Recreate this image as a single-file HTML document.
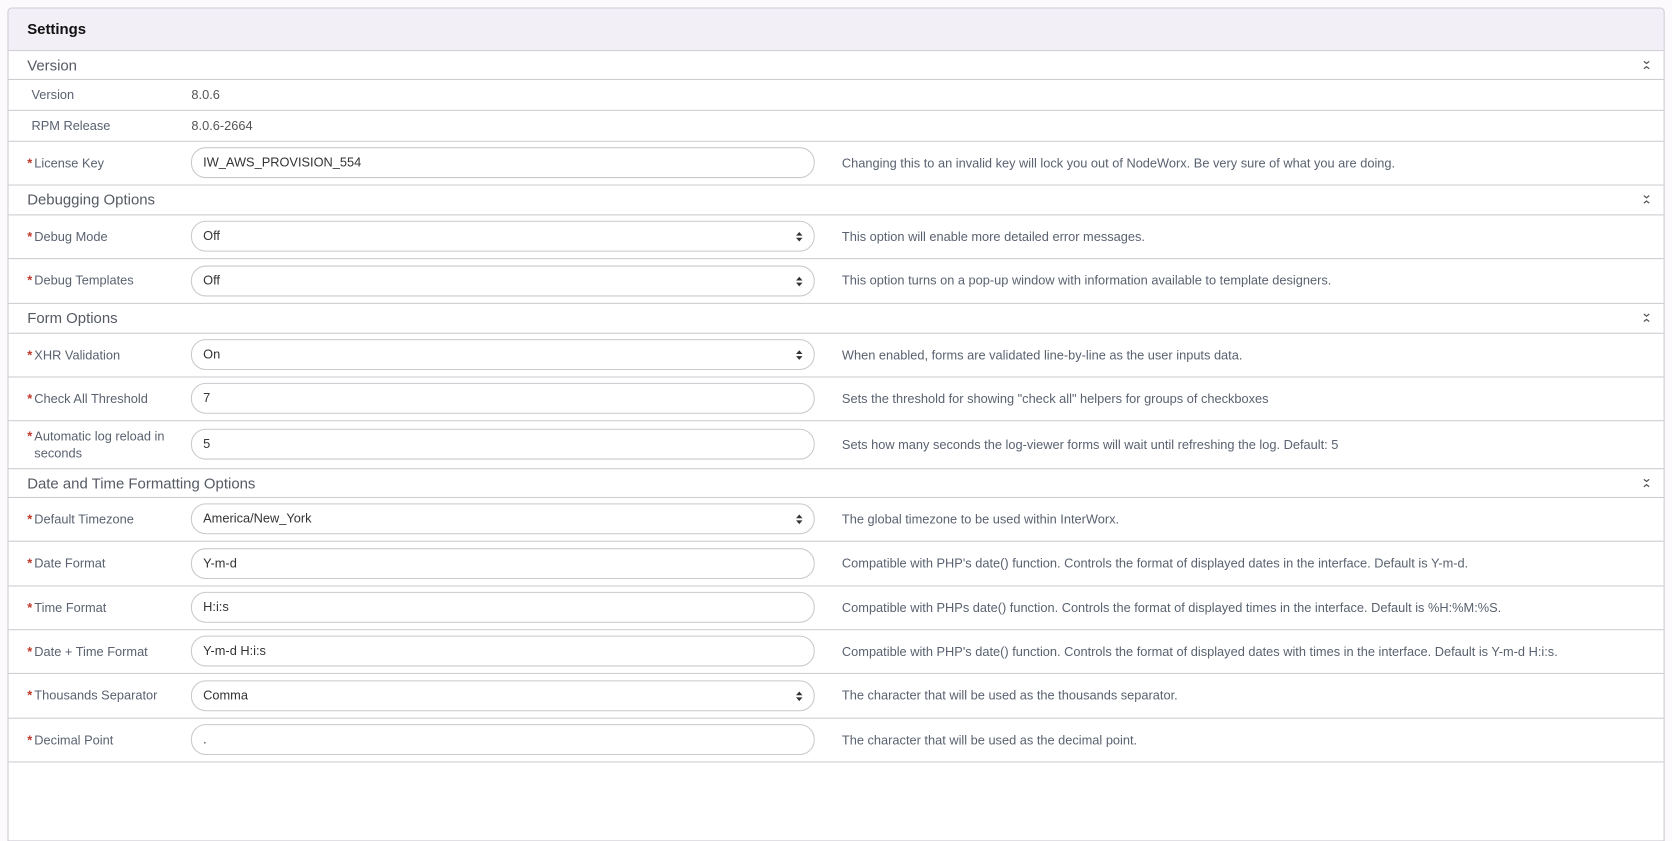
<!DOCTYPE html>
<html><head><style>
body{margin:0;background:#fcfafd;font-family:"Liberation Sans",sans-serif;width:1672px;height:767px;overflow:hidden;position:relative}
#w{position:absolute;left:0;top:0;width:1568px;height:720px;transform:scale(1.0664);transform-origin:0 0}
.box{position:absolute;left:6.5px;top:6.5px;width:1552px;height:780px;background:#fff;border:1px solid #cfc9d4;border-radius:4px 4px 0 0}
.hd{position:absolute;left:0;top:0;width:100%;height:39px;background:#f3eff7;border-bottom:1px solid #c8c8cc;border-radius:4px 4px 0 0}
.hd span{position:absolute;left:18px;top:11px;font-size:14px;color:#111;font-weight:bold}
.r{position:absolute;left:0;width:100%;border-bottom:1px solid #cdcdd2}
.sec span{position:absolute;left:18px;font-size:14px;color:#555a63}
.chev{position:absolute;right:12px;width:8px;height:10px}
.lbl{position:absolute;left:18px;font-size:12px;color:#5a6270;line-height:16px}
.lbl b{color:#c0392b;font-size:12px;margin-right:2px}
.val{position:absolute;left:172px;font-size:12px;color:#555}
.in{position:absolute;left:171px;width:572px;height:27px;border:1px solid #c9c9ce;border-radius:14px;font-size:12px;color:#333;line-height:27px;padding-left:11px;box-sizing:content-box}
.in i{position:absolute;right:10px;top:0;font-style:normal;font-size:8px;color:#333}
.help{position:absolute;left:782px;font-size:12px;color:#5a6270}
</style></head><body>
<div id="w">
<div class="box">
<div class="hd"><span>Settings</span></div>
</div>
</div>
<script>
const B=7;
const rows=[
['s',47,74,'Version'],
['v',74,103,'Version','8.0.6'],
['v',103,132,'RPM Release','8.0.6-2664'],
['i',132,173,'License Key','IW_AWS_PROVISION_554','Changing this to an invalid key will lock you out of NodeWorx. Be very sure of what you are doing.'],
['s',173,201,'Debugging Options'],
['d',201,242,'Debug Mode','Off','This option will enable more detailed error messages.'],
['d',242,284,'Debug Templates','Off','This option turns on a pop-up window with information available to template designers.'],
['s',284,312,'Form Options'],
['d',312,353,'XHR Validation','On','When enabled, forms are validated line-by-line as the user inputs data.'],
['i',353,394,'Check All Threshold','7','Sets the threshold for showing "check all" helpers for groups of checkboxes'],
['i2',394,439,'Automatic log reload in<br>&nbsp;&nbsp;seconds','5','Sets how many seconds the log-viewer forms will wait until refreshing the log. Default: 5'],
['s',439,466,'Date and Time Formatting Options'],
['d',466,507,'Default Timezone','America/New_York','The global timezone to be used within InterWorx.'],
['i',507,549,'Date Format','Y-m-d',"Compatible with PHP's date() function. Controls the format of displayed dates in the interface. Default is Y-m-d."],
['i',549,590,'Time Format','H:i:s','Compatible with PHPs date() function. Controls the format of displayed times in the interface. Default is %H:%M:%S.'],
['i',590,631,'Date + Time Format','Y-m-d H:i:s',"Compatible with PHP's date() function. Controls the format of displayed dates with times in the interface. Default is Y-m-d H:i:s."],
['d',631,673,'Thousands Separator','Comma','The character that will be used as the thousands separator.'],
['i',673,714,'Decimal Point','.','The character that will be used as the decimal point.'],
];
let h='';
for(const r of rows){
 const [t,y0,y1]=r;const H=y1-y0-1;const top=y0-B;
 h+=`<div class="r" style="top:${top}px;height:${H}px">`;
 if(t==='s'){h+=`<div class="sec"><span style="top:${(H-16)/2}px">${r[3]}</span></div><svg class="chev" style="top:${(H-10)/2}px" viewBox="0 0 8 10"><path d="M1.5 1.5L4 3.5L6.5 1.5M1.5 8.5L4 6.5L6.5 8.5" fill="none" stroke="#555" stroke-width="1.2"/></svg>`;}
 else if(t==='v'){h+=`<div class="lbl" style="left:22px;top:${(H-16)/2}px">${r[3]}</div><div class="val" style="top:${(H-14)/2}px">${r[4]}</div>`;}
 else{
  const lt=t==='i2'?6:(H-16)/2;
  h+=`<div class="lbl" style="top:${lt}px"><b>*</b>${r[3]}</div><div class="in" style="top:${(H-29)/2}px">${r[4]}${t==='d'?'<i></i>':''}</div><div class="help" style="top:${(H-14)/2}px">${r[5]}</div>`;
 }
 h+='</div>';
}
document.querySelector('.box').insertAdjacentHTML('beforeend',h);
document.querySelectorAll('.in i').forEach(e=>{e.innerHTML='<svg width="7" height="10" viewBox="0 0 7 10" style="margin-top:9px"><path d="M0.5 4L3.5 0.5L6.5 4Z M0.5 6L3.5 9.5L6.5 6Z" fill="#333"/></svg>';});
</script>
</body></html>
